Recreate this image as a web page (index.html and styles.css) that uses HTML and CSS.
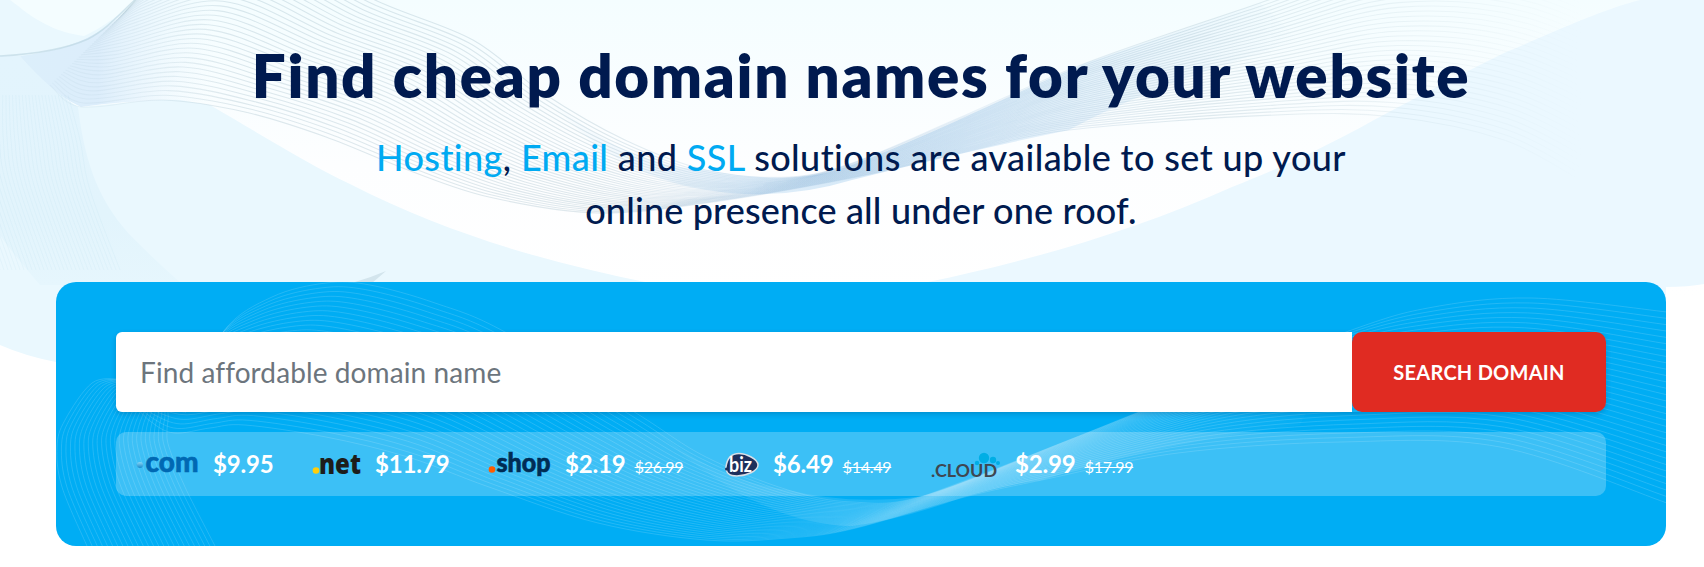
FILE: index.html
```html
<!DOCTYPE html>
<html lang="en">
<head>
<meta charset="utf-8">
<title>Find cheap domain names</title>
<link rel="stylesheet" href="styles.css">
</head>
<body>
<main class="hero">
  <svg class="hero-waves" viewBox="0 0 1704 567" aria-hidden="true">
    <defs>
      <linearGradient id="sky" x1="0" y1="0" x2="0" y2="1"><stop offset="0" stop-color="#f4fdff"/><stop offset=".55" stop-color="#fdfeff"/><stop offset="1" stop-color="#fff"/></linearGradient>
      <linearGradient id="leftPale" x1="0" y1="0" x2="0" y2="1"><stop offset="0" stop-color="#e3f4fd"/><stop offset=".7" stop-color="#e2f4fc"/><stop offset="1" stop-color="#e6f6fd"/></linearGradient>
      <linearGradient id="fold" x1="20" y1="0" x2="215" y2="0" gradientUnits="userSpaceOnUse"><stop offset="0" stop-color="#dceffb"/><stop offset=".4" stop-color="#dcedfb"/><stop offset="1" stop-color="#eefaff" stop-opacity="0"/></linearGradient>
      <linearGradient id="knot" x1="540" y1="0" x2="1300" y2="0" gradientUnits="userSpaceOnUse"><stop offset="0" stop-color="#b9d9f2" stop-opacity="0"/><stop offset=".38" stop-color="#b9d9f2" stop-opacity=".55"/><stop offset=".55" stop-color="#b9d9f2" stop-opacity=".5"/><stop offset="1" stop-color="#b9d9f2" stop-opacity="0"/></linearGradient>
      <linearGradient id="fade" x1="0" y1="0" x2="1704" y2="0" gradientUnits="userSpaceOnUse"><stop offset="0" stop-color="#86a8b8" stop-opacity=".04"/><stop offset=".08" stop-color="#86a8b8" stop-opacity=".12"/><stop offset=".14" stop-color="#86a8b8" stop-opacity=".26"/><stop offset=".35" stop-color="#86a8b8" stop-opacity=".26"/><stop offset=".44" stop-color="#86b0d4" stop-opacity=".14"/><stop offset=".58" stop-color="#86b0d4" stop-opacity=".16"/><stop offset=".7" stop-color="#86a8b8" stop-opacity=".25"/><stop offset=".93" stop-color="#86a8b8" stop-opacity="0"/></linearGradient>
    </defs>
    <path fill="url(#sky)" d="M0 0H1704V300H0Z"/>
    <path fill="#eaf8fe" d="M0 0H137L105 30L60 100L81 107C120 104 150 99 180 100L210 105C270 140 310 165 350 184C450 235 550 263 650 283L700 300H56V362Q25 356 0 345Z"/>
    <path fill="#f4fdff" d="M18 6C45 28 65 33 84 36Q105 27 137 0H10Z"/>
    <path fill="url(#fold)" d="M20 56C70 50 105 35 137 0H215V102Q140 98 81 107Q45 90 20 56Z"/>
    <path fill="url(#leftPale)" d="M0 56H20Q50 90 78 107C85 165 100 205 135 240Q160 265 183 285H40Q10 250 0 235Z"/>
    <path fill="#ebf8ff" d="M1704 0H1640C1600 10 1550 34 1504 53C1450 80 1410 101 1374 120C1320 150 1280 168 1232 187C1130 233 1020 263 928 282V300H1666V287Q1688 287 1704 284Z"/>
    <path fill="url(#knot)" d="M543 93C590 135 640 167 706 170C760 180 810 182 852 165C930 135 1010 95 1086 63L1260 3L1300 40Q1140 90 1069 130Q950 155 852 180Q780 202 706 190Q610 175 543 93Z"/>
    <g id="heroRibbon" fill="none" stroke="url(#fade)" stroke-width="1.1"></g>
    <g id="heroSide" fill="none" stroke="#7fb9d9" stroke-opacity=".08"></g>
    <path fill="none" stroke="#b9d3df" stroke-opacity=".6" stroke-width="1.5" d="M0 56C38 54 68 48 88 39C108 29 123 10 137 -2"/>
    <path fill="#d3e5ed" d="M355 282Q372 277 386 271Q378 278 372 283Z"/>
  </svg>
  <header class="intro">
    <h1>Find cheap domain names for your website</h1>
    <p class="lead"><span class="lead-one"><a>Hosting</a>, <a>Email</a> and <a>SSL</a> solutions are available to set up your</span><br><span class="lead-two">online presence all under one roof.</span></p>
  </header>
  <section class="search-card">
    <svg class="card-waves" viewBox="56 282 1610 264" aria-hidden="true">
      <defs><linearGradient id="knotWhite" x1="600" y1="0" x2="1350" y2="0" gradientUnits="userSpaceOnUse"><stop offset="0" stop-color="#fff" stop-opacity="0"/><stop offset=".35" stop-color="#fff" stop-opacity=".13"/><stop offset=".6" stop-color="#fff" stop-opacity=".14"/><stop offset="1" stop-color="#fff" stop-opacity="0"/></linearGradient></defs>
      <path fill="url(#knotWhite)" d="M636 413Q706 480 788 490Q852 506 923 496Q1020 460 1135 413L1346 332L1300 425Q1150 445 1042 480Q1000 486 961 498Q900 520 852 526Q750 525 636 413Z"/>
      <g id="cardRibbon" fill="none" stroke="#fff" stroke-opacity=".14"></g>
      <g id="cardSide" fill="none" stroke="#fff" stroke-opacity=".14"></g>
    </svg>
    <form class="search">
      <input type="text" placeholder="Find affordable domain name" aria-label="Domain name">
      <button type="button"><span>SEARCH DOMAIN</span></button>
    </form>
    <ul class="prices">
      <li class="com">
        <svg class="logo" width="64" height="26" viewBox="0 0 64 26"><defs><linearGradient id="ball" x1="0" y1="0" x2="0" y2="1"><stop offset="0" stop-color="#8bd6f6"/><stop offset="1" stop-color="#1489cc"/></linearGradient></defs><path d="M0 13H7" stroke="#46aee5"/><circle cx="4" cy="13" r="3" fill="url(#ball)"/><text x="9.5" y="20" textLength="53" lengthAdjust="spacingAndGlyphs" font-size="28" fill="#0068b3" stroke="#0068b3" stroke-width=".6">com</text></svg>
        <b>$9.95</b>
      </li>
      <li class="net">
        <svg class="logo" width="50" height="26" viewBox="0 0 50 26"><circle cx="4" cy="18.500" r="3.3" fill="#ffce0b"/><text x="7" y="22" textLength="42" lengthAdjust="spacingAndGlyphs" font-size="29" fill="#1d1d1b">net</text></svg>
        <b>$11.79</b>
      </li>
      <li class="shop">
        <svg class="logo" width="64" height="26" viewBox="0 0 64 26"><circle cx="4" cy="17.500" r="3.3" fill="#ff5c00"/><text x="8.500" y="20" textLength="54" lengthAdjust="spacingAndGlyphs" font-size="26" fill="#002c54" stroke="#002c54" stroke-width=".6">shop</text></svg>
        <b>$2.19</b><s>$26.99</s>
      </li>
      <li class="biz">
        <svg class="logo" width="36" height="26" viewBox="0 0 36 26"><path d="M2 15C3 7 7 1.500 15 1.500C22 1.500 34 7 34 13C34 19 22 24 13 24C6 24 2 22 2 15Z" fill="#1d2f5c" stroke="#d9dfe7" stroke-width="1.500"/><circle cx="2.500" cy="17" r="1.500" fill="#1d2f5c"/><text class="biz-word" x="5" y="19.500" textLength="23" lengthAdjust="spacingAndGlyphs" font-size="20" fill="#fff">biz</text></svg>
        <b>$6.49</b><s>$14.49</s>
      </li>
      <li class="cloud">
        <svg class="logo" width="71" height="26" viewBox="0 0 71 26"><g fill="#00aee5"><circle cx="53" cy="6" r="5.200"/><circle cx="62" cy="8" r="3.200"/><circle cx="67" cy="11" r="2"/><circle cx="46" cy="11" r="2.200"/></g><text class="cloud-word" x="0" y="25" textLength="66" lengthAdjust="spacingAndGlyphs" font-size="16.500" fill="#3f4750">.CLOUD</text></svg>
        <b>$2.99</b><s>$17.99</s>
      </li>
    </ul>
  </section>
</main>
<script src="waves.js"></script>
</body>
</html>
```

FILE: styles.css
```css
* { box-sizing: border-box; }
body { margin: 0; background: #fff; color: #001a4f; font-family: Lato, "Open Sans", sans-serif; }
.hero { position: relative; width: 1704px; height: 567px; padding: 0 38px 0 56px; overflow: hidden; }
.hero-waves { position: absolute; inset: 0; width: 1704px; height: 567px; }
.intro { position: relative; width: 1610px; height: 282px; padding-top: 37px; text-align: center; white-space: nowrap; }
h1 { margin: 0; font-size: 60px; line-height: 76px; font-weight: 800; letter-spacing: 1.7px; }
.lead { margin: 18px 0 0; font-size: 36px; line-height: 53px; font-weight: 500; }
.lead a { color: #00aaf2; }
.lead-one { letter-spacing: .4px; }
.lead-two { letter-spacing: .17px; }
.search-card { position: relative; width: 1610px; height: 264px; padding: 50px 60px; border-radius: 20px; background: #00adf4; overflow: hidden; }
.card-waves { position: absolute; inset: 0; width: 1610px; height: 264px; }
.search { position: relative; display: flex; height: 80px; margin: 0 0 20px; border-radius: 6px 10px 10px 6px; box-shadow: 0 2px 5px rgba(0, 50, 90, .24); }
.search input { width: 1236px; height: 80px; border: 0; border-radius: 6px 0 0 6px; padding: 0 24px; background: #fff; font: 400 28px Lato, sans-serif; letter-spacing: .1px; outline: 0; }
.search input::placeholder { color: #6c757d; opacity: 1; }
.search button { width: 254px; border: 0; border-radius: 10px; padding: 0; background: #e02b22; color: #fff; font: 700 20px Lato, sans-serif; letter-spacing: .25px; white-space: nowrap; }
.prices { position: relative; display: flex; height: 64px; margin: 0; padding: 0 0 0 20px; list-style: none; border-radius: 10px; background: rgba(255, 255, 255, .235); color: #fff; }
.prices li { display: flex; align-items: center; flex: none; white-space: nowrap; }
.com { width: 176px; }
.net { width: 176px; }
.shop { width: 236px; }
.biz { width: 207px; }
.logo { flex: none; margin: 1px 13px 0 0; overflow: visible; font-family: Lato, sans-serif; font-weight: 900; }
.net .logo { font-family: "Open Sans", sans-serif; font-weight: 800; }
.prices b { font-size: 24px; line-height: 30px; font-weight: 700; letter-spacing: -.15px; }
.prices s { margin: 6px 0 0 9px; font-size: 16px; line-height: 20px; letter-spacing: -.25px; }
.cloud-word, .biz-word { font-weight: 700; }
```

FILE: waves.js
```js
// Smooth cubic path through a list of points.
function smooth(p) {
  let d = `M${p[0]}`;
  for (let i = 0; i < p.length - 1; i++) {
    const a = p[i - 1] || p[i], b = p[i], c = p[i + 1], e = p[i + 2] || c;
    d += `C${b[0] + (c[0] - a[0]) / 6} ${b[1] + (c[1] - a[1]) / 6} ${c[0] - (e[0] - b[0]) / 6} ${c[1] - (e[1] - b[1]) / 6} ${c[0]} ${c[1]}`;
  }
  return d;
}

// Fills a group with lines blended from edge "from" to edge "to".
function ribbon(id, from, to, count) {
  const group = document.getElementById(id);
  for (let i = 0; i <= count; i++) {
    const t = i / count;
    const path = document.createElementNS('http://www.w3.org/2000/svg', 'path');
    path.setAttribute('d', smooth(from.map((p, k) => [p[0] + (to[k][0] - p[0]) * t, p[1] + (to[k][1] - p[1]) * t])));
    group.appendChild(path);
  }
}

ribbon('heroRibbon',
  [[125, 12], [170, -30], [260, -60], [375, 0], [473, 40], [543, 93], [625, 140], [706, 170], [788, 177], [852, 163], [961, 117], [1086, 63], [1260, 3], [1400, -45], [1540, -40], [1700, 30]],
  [[50, 85], [81, 107], [163, 100], [245, 112], [326, 137], [408, 170], [489, 197], [598, 213], [706, 203], [852, 178], [961, 153], [1069, 130], [1276, 115], [1395, 117], [1504, 140], [1575, 177]], 34);
ribbon('heroSide',
  [[-30, 95], [-35, 140], [-30, 180], [0, 270]],
  [[68, 95], [80, 140], [90, 190], [120, 270]], 30);
ribbon('cardRibbon',
  [[185, 413], [223, 332], [272, 297], [326, 283], [370, 285], [435, 303], [505, 332], [636, 413], [706, 457], [788, 490], [852, 502], [923, 496], [1069, 440], [1200, 388], [1346, 332], [1428, 308], [1531, 298], [1667, 312]],
  [[130, 400], [150, 421], [174, 433], [210, 428], [245, 425], [326, 437], [408, 457], [489, 487], [598, 523], [706, 540], [788, 538], [852, 529], [961, 498], [1042, 480], [1178, 453], [1341, 442], [1500, 447], [1667, 503]], 30);
ribbon('cardSide',
  [[120, 379], [92, 383], [65, 420], [57, 447], [62, 487], [87, 546]],
  [[160, 390], [168, 413], [167, 430], [169, 447], [185, 487], [215, 546]], 25);
```
